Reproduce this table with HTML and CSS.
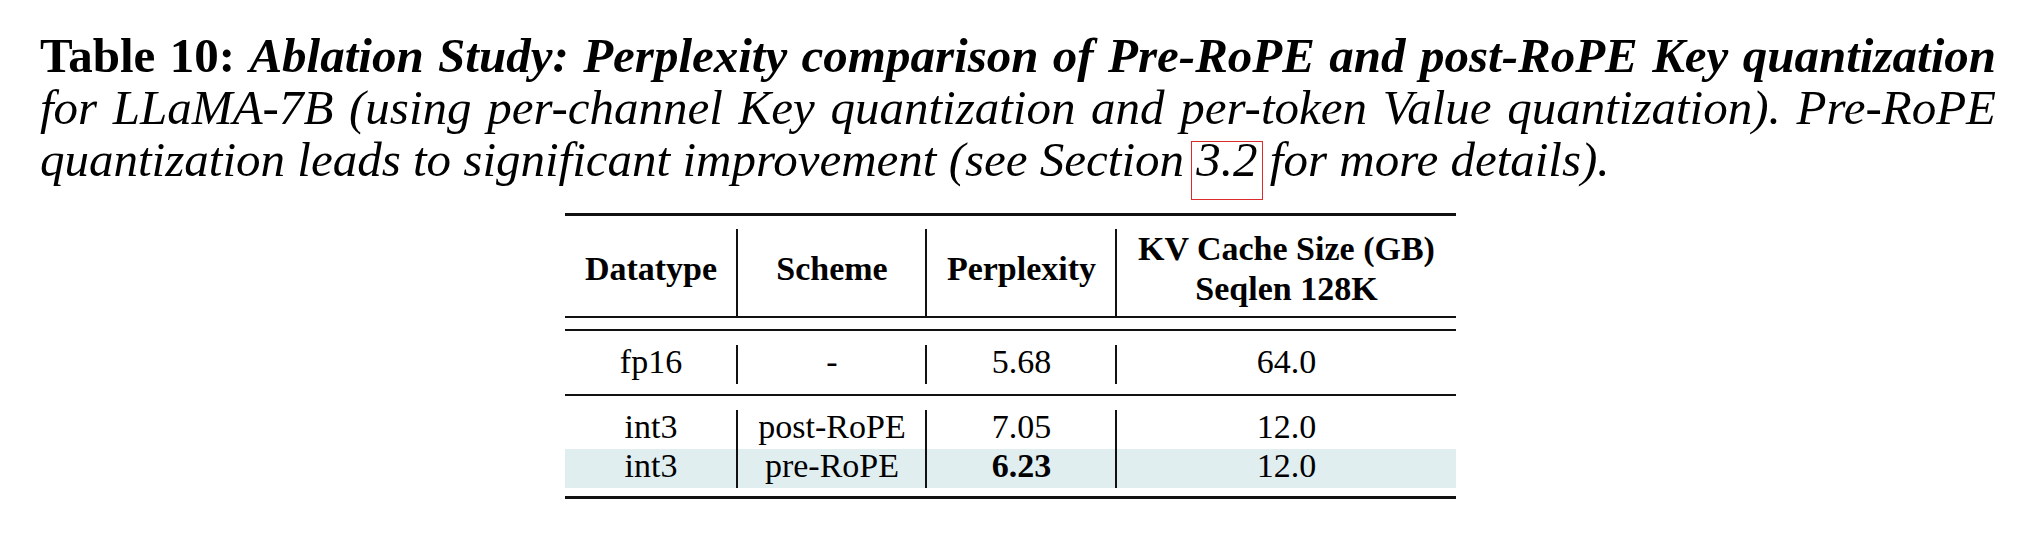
FILE: index.html
```html
<!DOCTYPE html>
<html>
<head>
<meta charset="utf-8">
<link rel="stylesheet" href="styles.css">
</head>
<body>
<div class="page">
  <p class="caption">
    <span class="line just"><b>Table 10:</b> <b><i>Ablation Study: Perplexity comparison of Pre-RoPE and post-RoPE Key quantization</i></b></span>
    <span class="line just"><i>for LLaMA-7B (using per-channel Key quantization and per-token Value quantization). Pre-RoPE</i></span>
    <span class="line"><i>quantization leads to significant improvement (see Section <span class="ref">3.2</span> for more details).</i></span>
  </p>
  <div class="tbl">
    <div class="rule thick"></div>
    <div class="row head">
      <div class="cell"><span>Datatype</span></div>
      <div class="cell sep"><span>Scheme</span></div>
      <div class="cell sep"><span>Perplexity</span></div>
      <div class="cell sep"><span>KV Cache Size (GB)<br>Seqlen 128K</span></div>
    </div>
    <div class="double"></div>
    <div class="row body first">
      <div class="cell">fp16</div>
      <div class="cell sep">-</div>
      <div class="cell sep">5.68</div>
      <div class="cell sep">64.0</div>
    </div>
    <div class="rule mid"></div>
    <div class="row body first">
      <div class="cell">int3</div>
      <div class="cell sep">post-RoPE</div>
      <div class="cell sep">7.05</div>
      <div class="cell sep">12.0</div>
    </div>
    <div class="row body hl">
      <div class="cell">int3</div>
      <div class="cell sep">pre-RoPE</div>
      <div class="cell sep"><b>6.23</b></div>
      <div class="cell sep">12.0</div>
    </div>
    <div class="rule thick bottom"></div>
  </div>
</div>
</body>
</html>
```

FILE: styles.css
```css
html, body {
  margin: 0;
  padding: 0;
  background: #ffffff;
}

.page {
  padding: 30px 0 0 40px;
  font-family: "Liberation Serif", "Times New Roman", serif;
  color: #000;
}

.caption {
  margin: 0;
  width: 1956px;
  font-size: 49px;
  line-height: 52px;
}

.line {
  display: block;
  white-space: nowrap;
}

.line.just {
  text-align: justify;
  text-align-last: justify;
  white-space: normal;
}

.ref {
  display: inline-block;
  line-height: 35px;
  padding: 0 4px 22px 4px;
  margin: 0 -5px -20px -5px;
  border: 1px solid #dc2b2b;
  vertical-align: baseline;
}

.tbl {
  margin-top: 27px;
  margin-left: 525px;
  width: 891px;
  font-size: 34px;
}

.rule {
  border-top: 2px solid #111;
}

.rule.thick {
  border-top-width: 3px;
}

.rule.mid {
  margin-top: 10px;
}

.rule.bottom {
  margin-top: 8px;
}

.double {
  margin-top: 9px;
  height: 11px;
  border-top: 2px solid #111;
  border-bottom: 2px solid #111;
}

.row {
  display: grid;
  grid-template-columns: 172px 189px 190px 340px;
}

.cell {
  text-align: center;
}

.cell.sep {
  border-left: 2px solid #111;
  margin-left: -1px;
}

.row.head {
  margin-top: 13px;
  height: 78px;
  font-weight: bold;
  line-height: 40px;
}

.row.head .cell {
  display: flex;
  align-items: center;
  justify-content: center;
  padding-bottom: 8px;
  box-sizing: border-box;
}

.row.body {
  line-height: 31px;
  padding: 0;
}

.row.body .cell {
  padding: 0 0 7px 0;
  height: 31px;
}

.row.body.first {
  margin-top: 14px;
}

.row.body.first:first-of-type {
  margin-top: 14px;
}

.row.body .cell {
  padding-top: 1px;
}

.row.hl {
  background: #e1eef0;
}
```
